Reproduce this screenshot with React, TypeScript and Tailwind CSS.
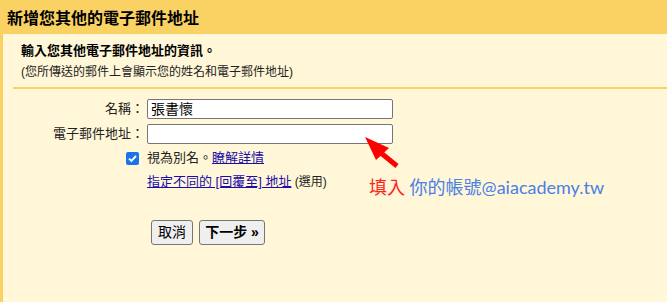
import React from "react";

const FONT = '"Liberation Sans", Arial, "Noto Sans CJK TC", sans-serif';

export default function App() {
  return (
    <div
      className="relative w-[667px] h-[302px] overflow-hidden bg-[#fff7d7] text-[#222]"
      style={{ fontFamily: FONT }}
    >
      <div className="h-[34px] bg-[#fad163] pl-[7px] pt-[9px] text-[16px] leading-[20px] font-bold text-black">
        新增您其他的電子郵件地址
      </div>
      <div className="h-[268px] border-l-[3px] border-[#fad163]">
        <div className="pl-[18px] pt-[8px]">
          <div className="text-[13px] leading-[18px] font-bold text-black">輸入您其他電子郵件地址的資訊。</div>
          <div className="mt-[4px] text-[12px] leading-[16px] text-[#222]">(您所傳送的郵件上會顯示您的姓名和電子郵件地址)</div>
        </div>
        <div className="ml-[10px] mt-[7px] h-[2px] bg-[#fad163]" />
        <div className="mt-[10px] flex flex-col text-[13px]">
          <div className="flex items-center h-[20px]">
            <div className="w-[141px] text-right">名稱：</div>
            <div className="ml-[3px] w-[246px] h-[20px] box-border border border-[#767676] rounded-[2px] bg-white px-[3px] text-[14px] leading-[18px] text-black">
              張書懷
            </div>
          </div>
          <div className="flex items-center h-[20px] mt-[5px]">
            <div className="w-[141px] text-right">電子郵件地址：</div>
            <div className="ml-[3px] w-[246px] h-[20px] box-border border border-[#767676] rounded-[2px] bg-white" />
          </div>
          <div className="flex items-center h-[18px] mt-[5px]">
            <div className="w-[137px] flex justify-end pr-[1px]">
              <div className="w-[13px] h-[13px] rounded-[2px] bg-[#1a73e8] flex items-center justify-center">
                <svg width="11" height="11" viewBox="0 0 11 11">
                  <path d="M2 5.6 L4.4 8 L9 3" stroke="white" strokeWidth="1.9" fill="none" />
                </svg>
              </div>
            </div>
            <div className="ml-[7px]">
              視為別名。<span className="text-[#1a0dab] underline">瞭解詳情</span>
            </div>
          </div>
          <div className="flex items-center h-[18px] mt-[6px]">
            <div className="w-[137px]" />
            <div className="ml-[7px]">
              <span className="text-[#1a0dab] underline">指定不同的 [回覆至] 地址</span>
              <span className="text-[12px]"> (選用)</span>
            </div>
          </div>
          <div className="flex mt-[29px] ml-[148px] gap-[6px]">
            <button className="h-[25px] w-[42px] box-border border border-[#767676] rounded-[3px] bg-[#efefef] text-[14px] text-black">
              取消
            </button>
            <button className="h-[25px] w-[66px] box-border border border-[#767676] rounded-[3px] bg-[#efefef] text-[14px] font-bold text-black">
              下一步 »
            </button>
          </div>
        </div>
      </div>
      <svg className="absolute left-[360px] top-[130px]" width="45" height="45" viewBox="360 130 45 45">
        <polygon points="365,137 389,148 376,160" fill="#ff0000" />
        <line x1="381" y1="153" x2="397" y2="166" stroke="#ff0000" strokeWidth="5" />
      </svg>
      <div
        className="absolute left-[369px] top-[176px] text-[18px] leading-[22px] whitespace-nowrap"
        style={{ fontFamily: 'Lato, "Noto Sans CJK TC", sans-serif' }}
      >
        <span className="text-[#ff2020]">填入</span>
        <span className="text-[#4a7fe8]"> 你的帳號@aiacademy.tw</span>
      </div>
    </div>
  );
}
